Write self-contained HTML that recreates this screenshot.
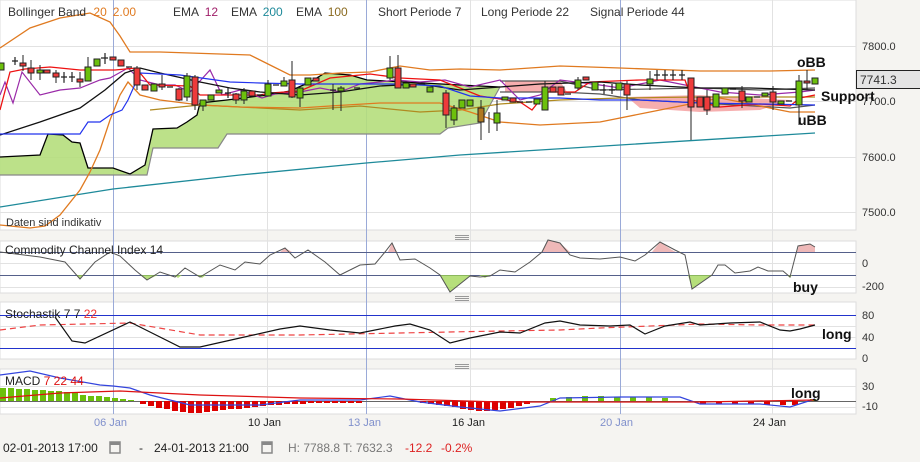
<!DOCTYPE html>
<html><head><meta charset="utf-8"><style>
html,body{margin:0;padding:0;background:#f5f4f1;}
svg{display:block;font-family:"Liberation Sans",sans-serif;}
</style></head><body>
<svg width="920" height="462" viewBox="0 0 920 462" xmlns="http://www.w3.org/2000/svg">
<rect width="920" height="462" fill="#f5f4f1"/>
<!-- panels -->
<rect x="0" y="0" width="856" height="230" fill="#fff" stroke="#ddd"/>
<rect x="0" y="241" width="856" height="52" fill="#fff" stroke="#ddd"/>
<rect x="0" y="302" width="856" height="57" fill="#fff" stroke="#ddd"/>
<rect x="0" y="369" width="856" height="45" fill="#fff" stroke="#ddd"/>
<!-- grid -->
<g stroke="#e2e2e2" stroke-width="1">
<line x1="0" y1="46.5" x2="856" y2="46.5"/><line x1="0" y1="101.5" x2="856" y2="101.5"/><line x1="0" y1="157.5" x2="856" y2="157.5"/><line x1="0" y1="212.5" x2="856" y2="212.5"/>
<line x1="267.5" y1="0" x2="267.5" y2="414"/><line x1="470.5" y1="0" x2="470.5" y2="414"/><line x1="772.5" y1="0" x2="772.5" y2="414"/>
<line x1="0" y1="263.5" x2="856" y2="263.5"/><line x1="0" y1="287.5" x2="856" y2="287.5"/>
<line x1="0" y1="326.5" x2="856" y2="326.5"/><line x1="0" y1="337.5" x2="856" y2="337.5"/>
<line x1="0" y1="386.5" x2="856" y2="386.5"/><line x1="0" y1="407.5" x2="856" y2="407.5"/>
</g>
<g stroke="#9aaad8" stroke-width="1">
<line x1="113.5" y1="0" x2="113.5" y2="414"/><line x1="366.5" y1="0" x2="366.5" y2="414"/><line x1="620.5" y1="0" x2="620.5" y2="414"/>
</g>
<!-- cloud -->
<polygon fill="#b5de7c" fill-opacity="0.9" stroke="none" points="0,157 40,155 48,134 63,135 72,142 80,143 88,168 113,168 130,174 145,165 153,129 177,128 187,122 197,115 200,100 227,100 267,95 290,91 310,82 325,73 350,75 367,80 460,85 500,87 480,123 448,128 440,134 227,134 218,148 153,148 147,175 0,175"/>
<polyline fill="none" stroke="#000" stroke-width="1.3" points="0,157 40,155 48,134 63,135 72,142 80,143 88,168 113,168 130,174 145,165 153,129 177,128 187,122 197,115 200,103 227,100 267,95 290,91 310,82 325,73 350,75 367,80 460,85 500,87"/>
<polyline fill="none" stroke="#888" stroke-width="1.2" points="0,175 147,175 153,148 218,148 227,134 440,134 448,128 480,123 500,87"/>
<polygon fill="#f4a0a0" fill-opacity="0.85" points="505,81 560,81 567,92 505,92"/>
<polygon fill="#f4a0a0" fill-opacity="0.85" points="627,97 700,95 725,97 790,100 760,110 700,112 640,108"/>
<polyline fill="none" stroke="#555" stroke-width="1.2" points="500,92 560,92 600,94 640,100 700,103 790,108 815,105"/>
<polyline fill="none" stroke="#555" stroke-width="1.2" points="500,81 560,81 600,90 700,88 760,90 815,88"/>
<!-- teal EMA200 -->
<polyline fill="none" stroke="#1e8a9a" stroke-width="1.3" points="0,207 113,189 240,175 366,163 460,155 620,145 815,133"/>
<!-- brown EMA100 -->
<polyline fill="none" stroke="#b08a20" stroke-width="1.2" points="150,110 200,105 260,108 300,110 360,106 420,112 460,110 500,104 560,100 620,98 700,97 815,97"/>
<!-- BB -->
<polyline fill="none" stroke="#e07a20" stroke-width="1.3" points="0,48 30,28 60,18 90,13 110,22 120,36 130,52 160,52 250,55 270,65 290,75 310,75 340,73 370,72 400,66 430,70 460,69 500,70 530,68 560,66 620,68 700,71 770,71 815,70"/>
<polyline fill="none" stroke="#e07a20" stroke-width="1.3" points="0,225 30,228 45,226 60,215 80,190 90,172 100,150 110,120 120,95 128,82 140,95 160,100 200,105 240,107 300,108 330,106 380,103 440,103 470,112 500,122 540,125 600,122 650,112 690,104 720,98 760,106 790,112 815,112"/>
<!-- EMA12 purple -->
<polyline fill="none" stroke="#9a2aa8" stroke-width="1.2" points="0,95 5,82 13,103 22,72 40,95 60,90 80,88 100,80 110,78 128,68 140,80 160,85 175,85 190,92 210,70 222,95 240,90 262,98 275,94 300,92 320,88 340,92 360,84 380,82 395,80 420,82 445,80 470,87 500,80 520,100 540,95 560,80 600,85 620,88 660,80 690,86 720,92 760,95 800,92 815,90"/>
<!-- red line -->
<polyline fill="none" stroke="#ee1111" stroke-width="1.3" points="0,110 10,72 25,69 50,67 80,70 115,70 136,68 150,85 190,86 200,95 230,95 260,95 270,93 300,91 330,78 370,74 400,78 440,80 480,96 520,102 532,110 540,100 548,92 575,92 590,82 640,80 685,80 692,100 720,107 760,104 790,106 800,98 815,95"/>
<!-- black line -->
<polyline fill="none" stroke="#111" stroke-width="1.3" points="0,135 40,122 80,108 105,90 125,73 140,68 160,73 200,82 230,88 260,92 300,95 340,92 380,86 420,84 460,90 500,87 540,84 600,82 640,85 700,88 750,88 815,90"/>
<!-- blue line -->
<polyline fill="none" stroke="#2233ee" stroke-width="1.2" points="0,134 80,134 88,122 100,122 110,115 122,110 128,100 140,73 180,75 230,82 260,83 300,84 400,84 440,86 470,96 500,98 560,98 600,100 640,100 700,103 760,104 815,105"/>
<!-- candles -->
<g stroke="#222" stroke-width="1">
<line x1="23" y1="55" x2="23" y2="71"/><line x1="31" y1="60" x2="31" y2="80"/><line x1="40" y1="65" x2="40" y2="80"/><line x1="56" y1="70" x2="56" y2="83"/><line x1="64" y1="72" x2="64" y2="83"/><line x1="72" y1="72" x2="72" y2="82"/><line x1="80" y1="72" x2="80" y2="87"/><line x1="88" y1="57" x2="88" y2="81"/><line x1="105" y1="53" x2="105" y2="64"/><line x1="137" y1="66" x2="137" y2="90"/><line x1="162" y1="75" x2="162" y2="90"/><line x1="179" y1="88" x2="179" y2="101"/><line x1="187" y1="73" x2="187" y2="101"/><line x1="195" y1="75" x2="195" y2="110"/><line x1="203" y1="100" x2="203" y2="111"/><line x1="236" y1="93" x2="236" y2="104"/><line x1="244" y1="88" x2="244" y2="104"/><line x1="268" y1="80" x2="268" y2="96"/><line x1="284" y1="77" x2="284" y2="86"/><line x1="292" y1="61" x2="292" y2="98"/><line x1="300" y1="87" x2="300" y2="107"/><line x1="333" y1="84" x2="333" y2="110"/><line x1="341" y1="86" x2="341" y2="111"/><line x1="390" y1="56" x2="390" y2="80"/><line x1="398" y1="55" x2="398" y2="88"/><line x1="446" y1="90" x2="446" y2="128"/><line x1="454" y1="105" x2="454" y2="125"/><line x1="481" y1="100" x2="481" y2="140"/><line x1="489" y1="112" x2="489" y2="133"/><line x1="497" y1="100" x2="497" y2="131"/><line x1="545" y1="81" x2="545" y2="110"/><line x1="578" y1="77" x2="578" y2="90"/><line x1="627" y1="81" x2="627" y2="110"/><line x1="650" y1="71" x2="650" y2="90"/><line x1="691" y1="78" x2="691" y2="140"/><line x1="707" y1="90" x2="707" y2="115"/><line x1="742" y1="86" x2="742" y2="108"/><line x1="773" y1="86" x2="773" y2="110"/><line x1="799" y1="75" x2="799" y2="125"/><line x1="807" y1="70" x2="807" y2="90"/>
</g>
<g stroke="#222" stroke-width="1" fill="#6cc00c">
<rect x="-2" y="63" width="6" height="7"/><rect x="37" y="70" width="6" height="3"/><rect x="85" y="67" width="6" height="14"/><rect x="94" y="59" width="6" height="7"/><rect x="151" y="84" width="6" height="7"/><rect x="184" y="76" width="6" height="21"/><rect x="200" y="100" width="6" height="6"/><rect x="208" y="95" width="6" height="5"/><rect x="216" y="90" width="6" height="3"/><rect x="241" y="91" width="6" height="9"/><rect x="265" y="84" width="6" height="12"/><rect x="281" y="81" width="6" height="5"/><rect x="297" y="88" width="6" height="10"/><rect x="305" y="78" width="6" height="7"/><rect x="338" y="88" width="6" height="3"/><rect x="387" y="68" width="6" height="10"/><rect x="403" y="83" width="6" height="5"/><rect x="427" y="87" width="6" height="5"/><rect x="451" y="108" width="6" height="12"/><rect x="459" y="100" width="6" height="8"/><rect x="467" y="100" width="6" height="6"/><rect x="494" y="113" width="6" height="10"/><rect x="502" y="97" width="6" height="3"/><rect x="534" y="99" width="6" height="5"/><rect x="542" y="87" width="6" height="23"/><rect x="575" y="80" width="6" height="8"/><rect x="592" y="82" width="6" height="8"/><rect x="616" y="83" width="6" height="7"/><rect x="647" y="79" width="6" height="5"/><rect x="713" y="94" width="6" height="13"/><rect x="722" y="88" width="6" height="6"/><rect x="746" y="97" width="6" height="5"/><rect x="762" y="93" width="6" height="3"/><rect x="778" y="101" width="6" height="3"/><rect x="796" y="81" width="6" height="24"/><rect x="812" y="78" width="6" height="6"/>
</g>
<g stroke="#222" stroke-width="1" fill="#ee3b3b">
<rect x="20" y="63" width="6" height="3"/><rect x="28" y="68" width="6" height="5"/><rect x="44" y="70" width="6" height="3"/><rect x="53" y="73" width="6" height="4"/><rect x="77" y="79" width="6" height="3"/><rect x="110" y="57" width="6" height="3"/><rect x="118" y="60" width="6" height="6"/><rect x="134" y="68" width="6" height="17"/><rect x="142" y="85" width="6" height="5"/><rect x="159" y="84" width="6" height="3"/><rect x="176" y="89" width="6" height="11"/><rect x="192" y="77" width="6" height="28"/><rect x="233" y="94" width="6" height="6"/><rect x="249" y="91" width="6" height="5"/><rect x="289" y="80" width="6" height="17"/><rect x="313" y="78" width="6" height="3"/><rect x="395" y="68" width="6" height="20"/><rect x="410" y="84" width="6" height="3"/><rect x="443" y="93" width="6" height="22"/><rect x="478" y="108" width="6" height="14" fill="#b07820"/><rect x="510" y="98" width="6" height="4"/><rect x="550" y="87" width="6" height="5"/><rect x="558" y="87" width="6" height="8"/><rect x="583" y="77" width="6" height="3"/><rect x="624" y="84" width="6" height="11"/><rect x="688" y="78" width="6" height="29"/><rect x="697" y="97" width="6" height="10"/><rect x="704" y="97" width="6" height="13"/><rect x="739" y="91" width="6" height="10"/><rect x="770" y="92" width="6" height="10"/><rect x="804" y="81" width="6" height="2"/>
</g>
<g stroke="#222" stroke-width="1.2">
<path d="M12,61h6M61,77h6M69,77h6M101,58h7M126,67h6M167,87h6M225,93h6M257,95h6M273,85h6M330,90h6M354,88h6M419,84h6M517,102h6M526,102h6M565,94h6M600,90h6M609,90h6M654,75h6M662,75h6M670,75h6M679,75h6M730,89h6M754,97h6M786,101h6"/>
<path d="M15,57v8M64,72v10M72,72v10M105,53v11M228,88v10M604,84v10M612,84v10M657,70v10M665,70v10M673,70v10M682,70v10"/>
</g>
<!-- header text -->
<g font-size="12" fill="#333">
<text x="8" y="16">Bollinger Band <tspan fill="#e07a20" dx="4">20</tspan><tspan fill="#e07a20" dx="6">2.00</tspan></text>
<text x="173" y="16">EMA <tspan fill="#a0206a" dx="3">12</tspan></text>
<text x="231" y="16">EMA <tspan fill="#1e8a9a" dx="3">200</tspan></text>
<text x="296" y="16">EMA <tspan fill="#8a6a20" dx="3">100</tspan></text>
<text x="378" y="16">Short Periode  7</text>
<text x="481" y="16">Long Periode  22</text>
<text x="590" y="16">Signal Periode  44</text>
<text x="6" y="226" font-size="11">Daten sind indikativ</text>
</g>
<!-- right axis -->
<g font-size="11" fill="#333">
<text x="862" y="50">7800.0</text><text x="862" y="105">7700.0</text><text x="862" y="161">7600.0</text><text x="862" y="216">7500.0</text>
</g>
<rect x="856.5" y="70.5" width="64" height="18" fill="#e4e4e4" stroke="#222"/>
<text x="860" y="84" font-size="12" fill="#333">7741.3</text>
<g font-size="14" font-weight="bold" fill="#111">
<text x="797" y="67">oBB</text><text x="821" y="101">Support</text><text x="798" y="125">uBB</text>
</g>
<!-- handles -->
<g stroke="#999" stroke-width="1"><path d="M455,235.5h14M455,237.5h14M455,239.5h14M455,296.5h14M455,298.5h14M455,300.5h14M455,364.5h14M455,366.5h14M455,368.5h14"/></g>
<!-- CCI -->
<line x1="0" y1="252.5" x2="856" y2="252.5" stroke="#55608a"/><line x1="0" y1="275.5" x2="856" y2="275.5" stroke="#55608a"/>
<g fill-opacity="0.75">
<polygon fill="#e8a0a0" points="280,252 285,248 292,252"/><polygon fill="#e8a0a0" points="388,252 392,243 397,252"/><polygon fill="#e8a0a0" points="542,252 548,240 560,243 570,252"/><polygon fill="#e8a0a0" points="652,252 660,242 672,250 676,252"/><polygon fill="#e8a0a0" points="797,252 799,245 810,244 815,247 815,252"/>
<polygon fill="#9ed44f" points="76,275 80,279 84,275"/><polygon fill="#9ed44f" points="140,275 147,280 158,275"/><polygon fill="#9ed44f" points="174,275 178,278 182,275"/><polygon fill="#9ed44f" points="197,275 202,278 206,275"/><polygon fill="#9ed44f" points="440,275 450,292 470,276 470,275"/><polygon fill="#9ed44f" points="479,275 485,278 490,275"/><polygon fill="#9ed44f" points="688,275 692,289 712,275"/><polygon fill="#9ed44f" points="787,275 790,278 792,275"/>
</g>
<polyline fill="none" stroke="#555" stroke-width="1" points="0,252 40,257 65,262 80,279 95,262 110,252 120,256 135,270 147,280 160,272 175,277 185,268 200,277 220,265 235,270 245,262 260,264 270,255 285,248 295,258 308,250 325,262 340,275 350,270 360,265 375,264 385,252 392,243 400,260 415,259 430,268 440,275 450,292 470,276 480,277 490,276 500,270 515,272 530,262 542,252 548,240 560,243 570,255 580,258 600,259 620,257 635,261 645,255 660,242 675,250 685,255 692,289 712,275 718,265 725,265 735,273 750,271 758,267 768,271 783,271 790,277 798,246 810,244 815,247"/>
<g font-size="12" fill="#222"><text x="5" y="254">Commodity Channel Index  14</text></g>
<g font-size="11" fill="#333"><text x="862" y="267">0</text><text x="862" y="290">-200</text></g>
<text x="793" y="292" font-size="14" font-weight="bold" fill="#111">buy</text>
<!-- Stochastik -->
<line x1="0" y1="315.5" x2="856" y2="315.5" stroke="#2233cc"/><line x1="0" y1="348.5" x2="856" y2="348.5" stroke="#2233cc"/>
<polyline fill="none" stroke="#ee4444" stroke-width="1.2" stroke-dasharray="6,4" points="0,330 40,325 130,323 200,335 300,335 400,333 500,331 560,330 600,328 700,324 760,325 815,325"/>
<polyline fill="none" stroke="#111" stroke-width="1.2" points="55,317 72,341 85,343 130,322 180,347 200,347 240,338 280,329 300,326 330,330 360,333 395,326 410,324 430,330 450,343 470,338 500,332 520,333 545,323 560,321 580,325 610,326 630,325 645,334 665,326 690,322 700,325 730,323 760,322 780,330 790,331 800,329 815,325"/>
<text x="5" y="318" font-size="12" fill="#222">Stochastik  7  7  <tspan fill="#ee3333">22</tspan></text>
<g font-size="11" fill="#333"><text x="862" y="319">80</text><text x="862" y="341">40</text><text x="862" y="362">0</text></g>
<text x="822" y="339" font-size="14" font-weight="bold" fill="#111">long</text>
<!-- MACD -->
<line x1="0" y1="401.5" x2="856" y2="401.5" stroke="#666"/>
<g fill="#6cc00c">
<rect x="0" y="388" width="6" height="13"/><rect x="8" y="388" width="6" height="13"/><rect x="16" y="389" width="6" height="12"/><rect x="24" y="389" width="6" height="12"/><rect x="32" y="390" width="6" height="11"/><rect x="40" y="390" width="6" height="11"/><rect x="48" y="391" width="6" height="10"/><rect x="56" y="391" width="6" height="10"/><rect x="64" y="392" width="6" height="9"/><rect x="72" y="393" width="6" height="8"/><rect x="80" y="395" width="6" height="6"/><rect x="88" y="396" width="6" height="5"/><rect x="96" y="396" width="6" height="5"/><rect x="104" y="397" width="6" height="4"/><rect x="112" y="398" width="6" height="3"/><rect x="120" y="399" width="6" height="2"/><rect x="128" y="400" width="6" height="1"/>
<rect x="550" y="398" width="6" height="3"/><rect x="566" y="397" width="6" height="4"/><rect x="582" y="396" width="6" height="5"/><rect x="598" y="396" width="6" height="5"/><rect x="614" y="397" width="6" height="4"/><rect x="630" y="397" width="6" height="4"/><rect x="646" y="397" width="6" height="4"/><rect x="662" y="398" width="6" height="3"/><rect x="810" y="399" width="6" height="2"/>
</g>
<g fill="#dd0000">
<rect x="140" y="401" width="6" height="3"/><rect x="148" y="401" width="6" height="5"/><rect x="156" y="401" width="6" height="7"/><rect x="164" y="401" width="6" height="8"/><rect x="172" y="401" width="6" height="10"/><rect x="180" y="401" width="6" height="11"/><rect x="188" y="401" width="6" height="12"/><rect x="196" y="401" width="6" height="12"/><rect x="204" y="401" width="6" height="11"/><rect x="212" y="401" width="6" height="10"/><rect x="220" y="401" width="6" height="9"/><rect x="228" y="401" width="6" height="8"/><rect x="236" y="401" width="6" height="8"/><rect x="244" y="401" width="6" height="7"/><rect x="252" y="401" width="6" height="6"/><rect x="260" y="401" width="6" height="5"/><rect x="268" y="401" width="6" height="4"/><rect x="276" y="401" width="6" height="4"/><rect x="284" y="401" width="6" height="3"/><rect x="292" y="401" width="6" height="3"/><rect x="300" y="401" width="6" height="3"/><rect x="308" y="401" width="6" height="2"/><rect x="316" y="401" width="6" height="2"/><rect x="324" y="401" width="6" height="2"/><rect x="332" y="401" width="6" height="2"/><rect x="340" y="401" width="6" height="2"/><rect x="348" y="401" width="6" height="2"/><rect x="356" y="401" width="6" height="2"/>
<rect x="420" y="401" width="6" height="2"/><rect x="428" y="401" width="6" height="3"/><rect x="436" y="401" width="6" height="4"/><rect x="444" y="401" width="6" height="5"/><rect x="452" y="401" width="6" height="6"/><rect x="460" y="401" width="6" height="8"/><rect x="468" y="401" width="6" height="9"/><rect x="476" y="401" width="6" height="10"/><rect x="484" y="401" width="6" height="10"/><rect x="492" y="401" width="6" height="9"/><rect x="500" y="401" width="6" height="8"/><rect x="508" y="401" width="6" height="7"/><rect x="516" y="401" width="6" height="5"/><rect x="524" y="401" width="6" height="3"/>
<rect x="700" y="401" width="6" height="3"/><rect x="716" y="401" width="6" height="3"/><rect x="732" y="401" width="6" height="3"/><rect x="748" y="401" width="6" height="3"/><rect x="764" y="401" width="6" height="4"/><rect x="780" y="401" width="6" height="4"/><rect x="792" y="401" width="6" height="4"/>
</g>
<polyline fill="none" stroke="#3344dd" stroke-width="1.2" points="0,375 30,371 60,378 100,385 113,386 130,388 150,395 190,405 260,405 300,400 360,400 390,396 420,402 460,407 500,411 540,406 560,398 620,397 680,397 700,404 760,404 790,407 815,399"/>
<polyline fill="none" stroke="#dd1111" stroke-width="1.2" points="0,398 60,393 120,391 200,395 300,398 400,399 500,402 600,402 700,402 815,400"/>
<text x="5" y="385" font-size="12" fill="#222">MACD  <tspan fill="#dd1111">7  22  44</tspan></text>
<g font-size="11" fill="#333"><text x="862" y="390">30</text><text x="862" y="410">-10</text></g>
<text x="791" y="398" font-size="14" font-weight="bold" fill="#111">long</text>
<!-- x axis -->
<g font-size="11">
<text x="94" y="426" fill="#8090cc">06 Jan</text><text x="248" y="426" fill="#222">10 Jan</text><text x="348" y="426" fill="#8090cc">13 Jan</text><text x="452" y="426" fill="#222">16 Jan</text><text x="600" y="426" fill="#8090cc">20 Jan</text><text x="753" y="426" fill="#222">24 Jan</text>
</g>
<!-- footer -->
<g font-size="12">
<text x="3" y="452" fill="#222">02-01-2013 17:00</text>
<text x="139" y="452" fill="#222">-</text>
<text x="154" y="452" fill="#222">24-01-2013 21:00</text>
<text x="288" y="452" fill="#777">H: 7788.8  T: 7632.3</text>
<text x="405" y="452" fill="#dd2222">-12.2</text>
<text x="441" y="452" fill="#dd2222">-0.2%</text>
</g>
<g fill="none" stroke="#888" stroke-width="1.5">
<rect x="110" y="442" width="10" height="11"/><rect x="262" y="442" width="10" height="11"/>
</g>
<g fill="#888"><rect x="110" y="442" width="10" height="3"/><rect x="262" y="442" width="10" height="3"/></g>
</svg>
</body></html>
